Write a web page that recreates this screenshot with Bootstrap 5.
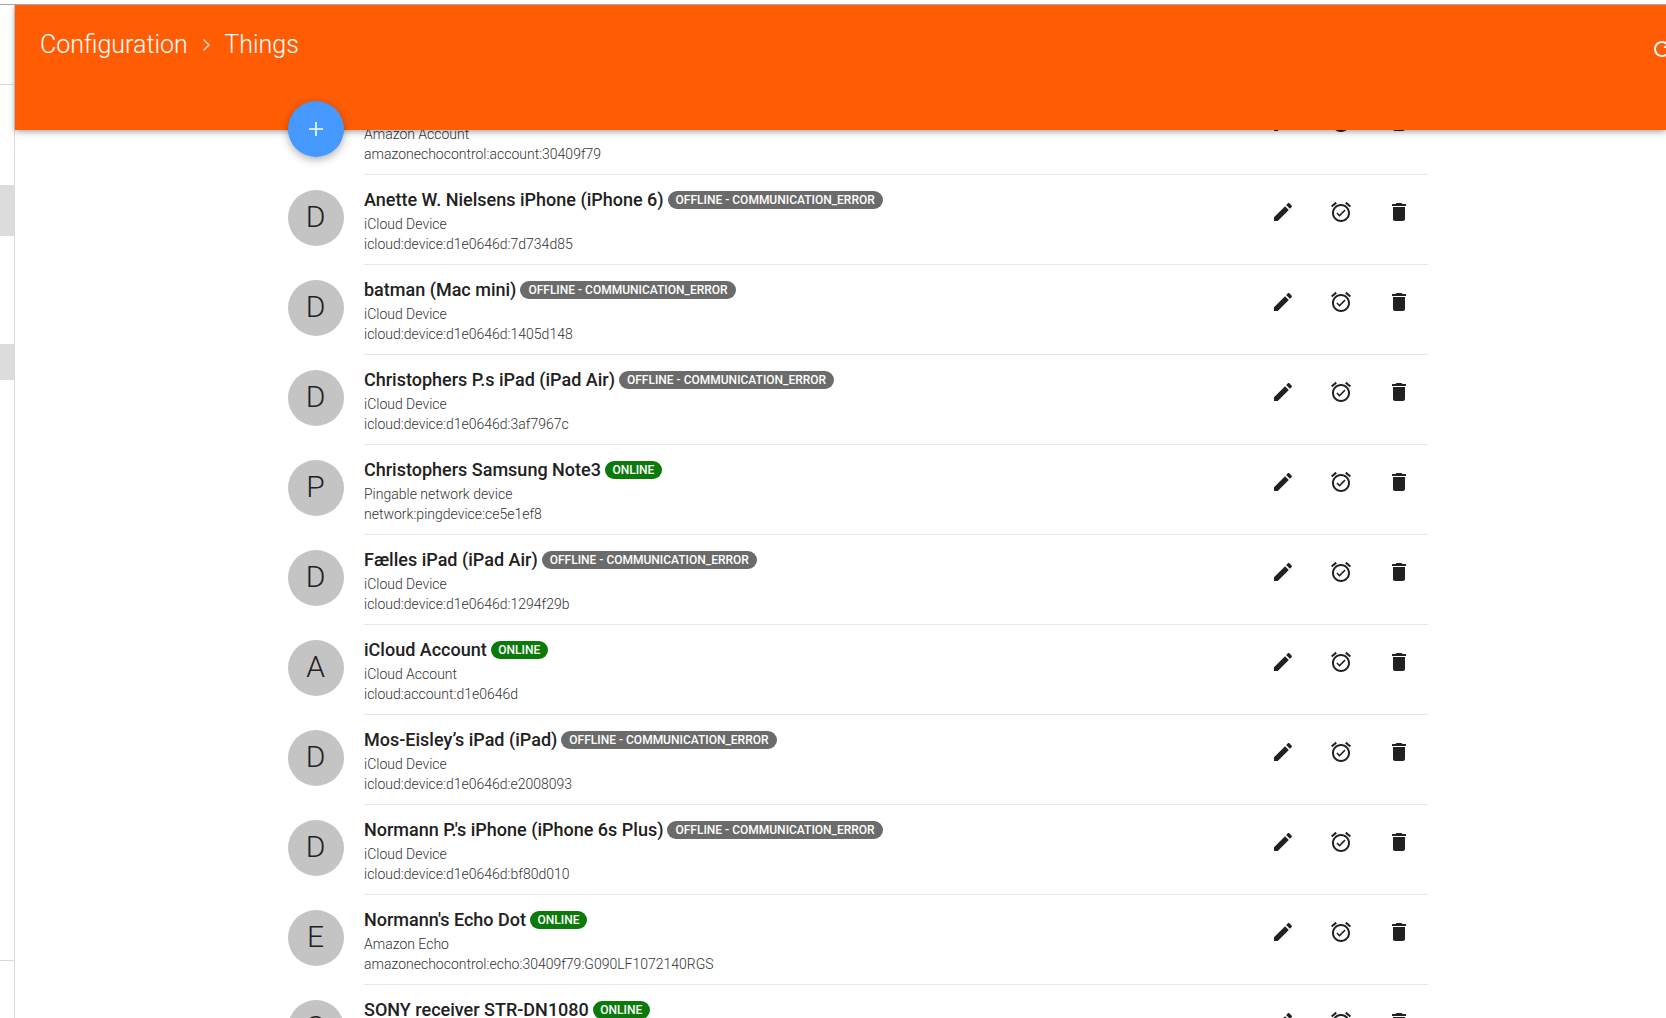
<!DOCTYPE html>
<html lang="en"><head><meta charset="utf-8"><title>Things</title>
<link rel="stylesheet" href="https://cdn.jsdelivr.net/npm/bootstrap@5.3.0/dist/css/bootstrap.min.css">
<style>
html,body{height:1018px;overflow:hidden;background:#fff}
body{font-family:Roboto,"Liberation Sans",sans-serif;color:#212121;padding-top:4px}
.shell{height:1014px;border-top:1px solid #a8a8a8;overflow:hidden}
.side{width:15px;border-right:1px solid #d8d8d8;background:#fff}
.side-a{height:80px;border-bottom:1px solid #d8d8d8}
.side-gap1{height:100px}
.side-on1{height:51px;background:#dcdcdc}
.side-gap2{height:108px}
.side-on2{height:36px;background:#dcdcdc}
.side-gap3{height:581px;border-bottom:1px solid #d8d8d8}
.main-col{min-width:0;position:relative}
.topbar{height:125px;background:#ff5c04;color:#fff;position:relative;z-index:2;box-shadow:0 2px 6px rgba(0,0,0,.35);padding:25px 0 0 25px}
.crumbs{font-size:25px;font-weight:300;line-height:30px}
.crumb-sep{margin:0 13.5px 0 14px;opacity:.75}
.refresh{margin:7px -8px 0 0}
.fab{position:absolute;left:273px;top:96px;width:56px;height:56px;border-radius:50%;background:#4599ff;z-index:3;box-shadow:0 3px 8px rgba(0,0,0,.3)}
.thing-list{margin:-45px 0 0 273px;width:1140px}
.thing{height:90px}
.ava{width:56px;height:56px;border-radius:50%;background:#c4c4c4;font-size:30px;font-weight:300;margin:15px 20px 0 0;padding:0 1px 3px 0;flex:none}
.thing-body{border-bottom:1px solid #e8e8e8;min-width:0}
.thing-name{font-size:18px;font-weight:500;line-height:24px;margin:13px 0 2px}
.thing-line{font-size:14px;font-weight:300;line-height:20px;color:#333}
.pill{font-size:12px;font-weight:500;line-height:18px;height:18px;border-radius:9px;color:#fff;margin-left:4px;display:inline-block;vertical-align:2px}
.pill-off{background:#6b6b6b;padding:0 8px}
.pill-on{background:#0b7a0b;padding:0 7.5px}
.acts{margin:25px 17px 0 0;gap:34px}
.acts svg{display:block;width:24px;height:24px;fill:#212121}
</style></head><body>
<svg width="0" height="0" class="d-none">
<symbol id="i-edit" viewBox="0 0 24 24"><path d="M3 17.25V21h3.75L17.81 9.94l-3.75-3.75L3 17.25zM20.71 7.04c.39-.39.39-1.02 0-1.41l-2.34-2.34c-.39-.39-1.02-.39-1.41 0l-1.83 1.83 3.75 3.75 1.83-1.83z"/></symbol>
<symbol id="i-alarm" viewBox="0 0 24 24"><path d="M22 5.72l-4.6-3.86-1.29 1.53 4.6 3.86L22 5.72zM7.88 3.39L6.6 1.86 2 5.71l1.29 1.53 4.59-3.85zM12 4c-4.97 0-9 4.03-9 9s4.02 9 9 9c4.97 0 9-4.03 9-9s-4.03-9-9-9zm0 16c-3.87 0-7-3.13-7-7s3.13-7 7-7 7 3.13 7 7-3.13 7-7 7zm-1.46-5.47L8.41 12.4l-1.06 1.06 3.18 3.18 6-6-1.06-1.06-4.93 4.95z"/></symbol>
<symbol id="i-del" viewBox="0 0 24 24"><path d="M6 19c0 1.1.9 2 2 2h8c1.1 0 2-.9 2-2V7H6v12zM19 4h-3.5l-1-1h-5l-1 1H5v2h14V4z"/></symbol>
</svg>
<div class="shell d-flex">
<aside class="side flex-none">
<div class="side-a"></div><div class="side-gap1"></div><div class="side-on1"></div><div class="side-gap2"></div><div class="side-on2"></div><div class="side-gap3"></div>
</aside>
<main class="main-col flex-grow-1">
<header class="topbar d-flex justify-content-between align-items-start">
<div class="crumbs d-flex align-items-center"><span>Configuration</span><svg class="crumb-sep" width="9" height="14" viewBox="0 0 9 14"><path d="M1.5 1.5 7 7l-5.5 5.5" fill="none" stroke="#fff" stroke-width="1.6"/></svg><span>Things</span></div>
<svg class="refresh" width="24" height="24" viewBox="0 0 24 24" fill="#fff"><path d="M17.65 6.35C16.2 4.9 14.21 4 12 4c-4.42 0-7.99 3.58-7.99 8s3.57 8 7.99 8c3.73 0 6.84-2.55 7.73-6h-2.08c-.82 2.33-3.04 4-5.65 4-3.31 0-6-2.69-6-6s2.69-6 6-6c1.66 0 3.14.69 4.22 1.78L13 11h7V4l-2.35 2.35z"/></svg>
</header>
<div class="fab d-flex align-items-center justify-content-center"><svg width="14" height="14" viewBox="0 0 14 14"><path d="M7 0v14M0 7h14" stroke="#fff" stroke-width="1.6"/></svg></div>
<div class="thing-list">

<div class="thing d-flex"><div class="ava d-flex align-items-center justify-content-center">A</div><div class="thing-body flex-grow-1 d-flex justify-content-between"><div><div class="thing-name">Amazon Account<span class="pill pill-on">ONLINE</span></div><div class="thing-line">Amazon Account</div><div class="thing-line">amazonechocontrol:account:30409f79</div></div><div class="acts d-flex"><svg><use href="#i-edit"/></svg><svg><use href="#i-alarm"/></svg><svg><use href="#i-del"/></svg></div></div></div>

<div class="thing d-flex"><div class="ava d-flex align-items-center justify-content-center">D</div><div class="thing-body flex-grow-1 d-flex justify-content-between"><div><div class="thing-name">Anette W. Nielsens iPhone (iPhone 6)<span class="pill pill-off">OFFLINE - COMMUNICATION_ERROR</span></div><div class="thing-line">iCloud Device</div><div class="thing-line">icloud:device:d1e0646d:7d734d85</div></div><div class="acts d-flex"><svg><use href="#i-edit"/></svg><svg><use href="#i-alarm"/></svg><svg><use href="#i-del"/></svg></div></div></div>

<div class="thing d-flex"><div class="ava d-flex align-items-center justify-content-center">D</div><div class="thing-body flex-grow-1 d-flex justify-content-between"><div><div class="thing-name">batman (Mac mini)<span class="pill pill-off">OFFLINE - COMMUNICATION_ERROR</span></div><div class="thing-line">iCloud Device</div><div class="thing-line">icloud:device:d1e0646d:1405d148</div></div><div class="acts d-flex"><svg><use href="#i-edit"/></svg><svg><use href="#i-alarm"/></svg><svg><use href="#i-del"/></svg></div></div></div>

<div class="thing d-flex"><div class="ava d-flex align-items-center justify-content-center">D</div><div class="thing-body flex-grow-1 d-flex justify-content-between"><div><div class="thing-name">Christophers P.s iPad (iPad Air)<span class="pill pill-off">OFFLINE - COMMUNICATION_ERROR</span></div><div class="thing-line">iCloud Device</div><div class="thing-line">icloud:device:d1e0646d:3af7967c</div></div><div class="acts d-flex"><svg><use href="#i-edit"/></svg><svg><use href="#i-alarm"/></svg><svg><use href="#i-del"/></svg></div></div></div>

<div class="thing d-flex"><div class="ava d-flex align-items-center justify-content-center">P</div><div class="thing-body flex-grow-1 d-flex justify-content-between"><div><div class="thing-name">Christophers Samsung Note3<span class="pill pill-on">ONLINE</span></div><div class="thing-line">Pingable network device</div><div class="thing-line">network:pingdevice:ce5e1ef8</div></div><div class="acts d-flex"><svg><use href="#i-edit"/></svg><svg><use href="#i-alarm"/></svg><svg><use href="#i-del"/></svg></div></div></div>

<div class="thing d-flex"><div class="ava d-flex align-items-center justify-content-center">D</div><div class="thing-body flex-grow-1 d-flex justify-content-between"><div><div class="thing-name">Fælles iPad (iPad Air)<span class="pill pill-off">OFFLINE - COMMUNICATION_ERROR</span></div><div class="thing-line">iCloud Device</div><div class="thing-line">icloud:device:d1e0646d:1294f29b</div></div><div class="acts d-flex"><svg><use href="#i-edit"/></svg><svg><use href="#i-alarm"/></svg><svg><use href="#i-del"/></svg></div></div></div>

<div class="thing d-flex"><div class="ava d-flex align-items-center justify-content-center">A</div><div class="thing-body flex-grow-1 d-flex justify-content-between"><div><div class="thing-name">iCloud Account<span class="pill pill-on">ONLINE</span></div><div class="thing-line">iCloud Account</div><div class="thing-line">icloud:account:d1e0646d</div></div><div class="acts d-flex"><svg><use href="#i-edit"/></svg><svg><use href="#i-alarm"/></svg><svg><use href="#i-del"/></svg></div></div></div>

<div class="thing d-flex"><div class="ava d-flex align-items-center justify-content-center">D</div><div class="thing-body flex-grow-1 d-flex justify-content-between"><div><div class="thing-name">Mos-Eisley’s iPad (iPad)<span class="pill pill-off">OFFLINE - COMMUNICATION_ERROR</span></div><div class="thing-line">iCloud Device</div><div class="thing-line">icloud:device:d1e0646d:e2008093</div></div><div class="acts d-flex"><svg><use href="#i-edit"/></svg><svg><use href="#i-alarm"/></svg><svg><use href="#i-del"/></svg></div></div></div>

<div class="thing d-flex"><div class="ava d-flex align-items-center justify-content-center">D</div><div class="thing-body flex-grow-1 d-flex justify-content-between"><div><div class="thing-name">Normann P.'s iPhone (iPhone 6s Plus)<span class="pill pill-off">OFFLINE - COMMUNICATION_ERROR</span></div><div class="thing-line">iCloud Device</div><div class="thing-line">icloud:device:d1e0646d:bf80d010</div></div><div class="acts d-flex"><svg><use href="#i-edit"/></svg><svg><use href="#i-alarm"/></svg><svg><use href="#i-del"/></svg></div></div></div>

<div class="thing d-flex"><div class="ava d-flex align-items-center justify-content-center">E</div><div class="thing-body flex-grow-1 d-flex justify-content-between"><div><div class="thing-name">Normann's Echo Dot<span class="pill pill-on">ONLINE</span></div><div class="thing-line">Amazon Echo</div><div class="thing-line">amazonechocontrol:echo:30409f79:G090LF1072140RGS</div></div><div class="acts d-flex"><svg><use href="#i-edit"/></svg><svg><use href="#i-alarm"/></svg><svg><use href="#i-del"/></svg></div></div></div>

<div class="thing d-flex"><div class="ava d-flex align-items-center justify-content-center">S</div><div class="thing-body flex-grow-1 d-flex justify-content-between"><div><div class="thing-name">SONY receiver STR-DN1080<span class="pill pill-on">ONLINE</span></div><div class="thing-line">Sony receiver</div><div class="thing-line">sonyaudio:STR-DN1080</div></div><div class="acts d-flex"><svg><use href="#i-edit"/></svg><svg><use href="#i-alarm"/></svg><svg><use href="#i-del"/></svg></div></div></div>

</div>
</main>
</div>
</body></html>
